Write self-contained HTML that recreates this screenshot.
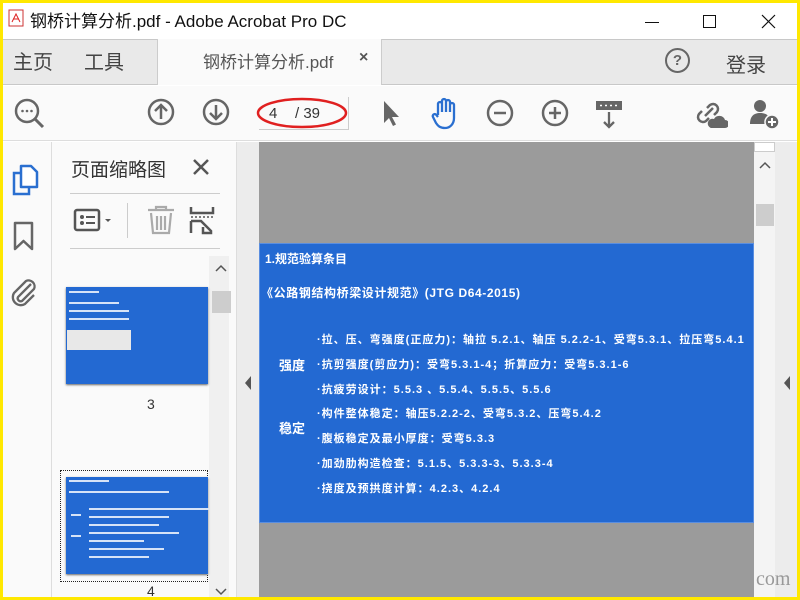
<!DOCTYPE html>
<html><head><meta charset="utf-8"><style>
*{margin:0;padding:0;box-sizing:border-box}
body{width:800px;height:600px;overflow:hidden;background:#ffe800;font-family:"Liberation Sans","Noto Sans CJK SC",sans-serif;position:relative}
.a{position:absolute}
.cj{font-family:"Liberation Sans","Noto Sans CJK SC",sans-serif}
.w{color:#fff;font-weight:bold;white-space:nowrap}
.tl{position:absolute;height:2px;background:#d6e3f7}
</style></head><body>
<div class="a" style="left:3px;top:3px;width:794px;height:594px;background:#fff;overflow:hidden">
<div class="a" style="left:0;top:0;width:794px;height:36px;background:#fff"></div>
<svg class="a" style="left:5px;top:6px" width="16" height="18"><rect x="1" y="1" width="14" height="16" fill="#fff" stroke="#c33"/><path d="M4 13 L8 5 L12 13 M5 10 H11" stroke="#d22" fill="none"/></svg>
<div class="a" style="left:27px;top:4px;font-size:17px;color:#111">钢桥计算分析.pdf - Adobe Acrobat Pro DC</div>
<div class="a" style="left:642px;top:19px;width:14px;height:1px;background:#111"></div>
<div class="a" style="left:700px;top:12px;width:13px;height:13px;border:1px solid #111"></div>
<svg class="a" style="left:758px;top:11px" width="15" height="15"><path d="M1 1L14 14M14 1L1 14" stroke="#111" stroke-width="1.2"/></svg>
<div class="a" style="left:0;top:36px;width:794px;height:46px;background:#e9e9e9;border-top:1px solid #c8c8c8;border-bottom:1px solid #c8c8c8"></div>
<div class="a" style="left:154px;top:36px;width:225px;height:46px;background:#fafafa;border-left:1px solid #ccc;border-right:1px solid #ccc"></div>
<div class="a cj" style="left:10px;top:43px;font-size:20px;color:#444">主页</div>
<div class="a cj" style="left:81px;top:43px;font-size:20px;color:#444">工具</div>
<div class="a cj" style="left:200px;top:45px;font-size:17px;color:#555">钢桥计算分析.pdf</div>
<div class="a" style="left:356px;top:46px;font-size:16px;color:#555;font-weight:bold">×</div>
<div class="a" style="left:662px;top:45px;width:25px;height:25px;border:2px solid #666;border-radius:50%;text-align:center;font-size:15px;line-height:21px;color:#666;font-weight:bold">?</div>
<div class="a cj" style="left:723px;top:46px;font-size:20px;color:#444">登录</div>
<div class="a" style="left:0;top:83px;width:794px;height:55px;background:#fafafa;border-bottom:1px solid #ddd"></div>
<svg class="a" style="left:10px;top:94px" width="34" height="34"><circle cx="14" cy="14" r="11" fill="none" stroke="#666" stroke-width="2.5"/><path d="M22 22L30 30" stroke="#666" stroke-width="3"/><circle cx="9.5" cy="14" r="1.3" fill="#666"/><circle cx="14" cy="14" r="1.3" fill="#666"/><circle cx="18.5" cy="14" r="1.3" fill="#666"/></svg>
<svg class="a" style="left:144px;top:95px" width="28" height="28"><circle cx="14" cy="14" r="12" fill="none" stroke="#666" stroke-width="2.5"/><path d="M14 21V7M8 13L14 7L20 13" stroke="#666" stroke-width="2.5" fill="none"/></svg>
<svg class="a" style="left:199px;top:95px" width="28" height="28"><circle cx="14" cy="14" r="12" fill="none" stroke="#666" stroke-width="2.5"/><path d="M14 7V21M8 15L14 21L20 15" stroke="#666" stroke-width="2.5" fill="none"/></svg>
<div class="a" style="left:256px;top:97px;width:90px;height:30px;border-bottom:1px solid #ccc"></div>
<div class="a" style="left:345px;top:94px;width:1px;height:33px;background:#ccc"></div>
<svg class="a" style="left:252px;top:92px" width="96" height="36"><ellipse cx="47" cy="18" rx="44" ry="14" fill="none" stroke="#e02020" stroke-width="2.5"/></svg>
<div class="a" style="left:266px;top:102px;font-size:15px;color:#333">4</div>
<div class="a" style="left:292px;top:102px;font-size:15px;color:#333">/ 39</div>
<svg class="a" style="left:378px;top:96px" width="20" height="28"><path d="M3 2V24L8 19L12 27L15 25.5L11 18H18Z" fill="#666"/></svg>
<svg class="a" style="left:427px;top:94px" width="32" height="34"><path d="M8 18V7a2 2 0 0 1 4 0V15M12 15V4a2 2 0 0 1 4 0V15M16 15V5a2 2 0 0 1 4 0V15M20 15V8a2 2 0 0 1 4 0V21c0 6-4 10-9 10s-7-2-9-5L3 20a2 2 0 0 1 3-2.5L8 20" fill="none" stroke="#2a6fd0" stroke-width="2.3" stroke-linejoin="round"/></svg>
<svg class="a" style="left:483px;top:96px" width="28" height="28"><circle cx="14" cy="14" r="12" fill="none" stroke="#666" stroke-width="2.5"/><path d="M8 14H20" stroke="#666" stroke-width="2.5"/></svg>
<svg class="a" style="left:538px;top:96px" width="28" height="28"><circle cx="14" cy="14" r="12" fill="none" stroke="#666" stroke-width="2.5"/><path d="M8 14H20M14 8V20" stroke="#666" stroke-width="2.5"/></svg>
<svg class="a" style="left:592px;top:97px" width="30" height="30"><rect x="1" y="1" width="26" height="9" fill="#666"/><path d="M5 5.5h2M10 5.5h2M15 5.5h2M20 5.5h2" stroke="#fff" stroke-width="1.5"/><path d="M14 12V27M9 22L14 27L19 22" stroke="#666" stroke-width="2.3" fill="none"/></svg>
<svg class="a" style="left:691px;top:95px" width="34" height="32"><path d="M13 10l3-3a5 5 0 0 1 7 7l-3 3M15 20l-3 3a5 5 0 0 1-7-7l3-3M11 18l8-8" fill="none" stroke="#666" stroke-width="2.5"/><path d="M17 30h14a4 4 0 0 0 0-8a6 6 0 0 0-11-1a4 4 0 0 0-3 9z" fill="#666"/></svg>
<svg class="a" style="left:745px;top:95px" width="34" height="32"><circle cx="12" cy="8" r="6" fill="#666"/><path d="M2 26c0-8 4-11 10-11s8 2 9 5v6z" fill="#666"/><circle cx="24" cy="24" r="7" fill="#666" stroke="#fafafa" stroke-width="1.5"/><path d="M20 24h8M24 20v8" stroke="#fff" stroke-width="2"/></svg>
<div class="a" style="left:0;top:139px;width:49px;height:455px;background:#fafafa;border-right:1px solid #ddd"></div>
<svg class="a" style="left:8px;top:160px" width="28" height="34"><path d="M10 3H20L26 9V24H10Z" fill="#fff" stroke="#2a6fd0" stroke-width="2.5" stroke-linejoin="round"/><path d="M10 10H3V31H18V24" fill="none" stroke="#2a6fd0" stroke-width="2.5"/></svg>
<svg class="a" style="left:9px;top:218px" width="24" height="32"><path d="M3 2H20V28L11.5 20L3 28Z" fill="none" stroke="#666" stroke-width="2.5" stroke-linejoin="round"/></svg>
<svg class="a" style="left:6px;top:273px" width="30" height="32"><path d="M22 8L9 21a3 3 0 0 0 4 4L25 13a6 6 0 0 0-8-8L5 17a8 8 0 0 0 11 11l9-9" fill="none" stroke="#666" stroke-width="2.3"/></svg>
<div class="a" style="left:49px;top:139px;width:185px;height:455px;background:#fafafa;border-right:1px solid #ddd"></div>
<div class="a cj" style="left:68px;top:152px;font-size:19px;color:#333">页面缩略图</div>
<svg class="a" style="left:189px;top:155px" width="18" height="18"><path d="M2 2L16 16M16 2L2 16" stroke="#555" stroke-width="2.5"/></svg>
<div class="a" style="left:67px;top:190px;width:150px;height:1px;background:#ccc"></div>
<div class="a" style="left:67px;top:245px;width:150px;height:1px;background:#ccc"></div>
<svg class="a" style="left:70px;top:205px" width="44" height="24"><rect x="2" y="2" width="24" height="20" rx="2" fill="none" stroke="#555" stroke-width="2.5"/><circle cx="9" cy="9" r="2" fill="#555"/><circle cx="9" cy="15" r="2" fill="#555"/><path d="M13 9h9M13 15h9" stroke="#555" stroke-width="2"/><path d="M32 11h6l-3 3z" fill="#555"/></svg>
<div class="a" style="left:124px;top:200px;width:1px;height:35px;background:#ccc"></div>
<svg class="a" style="left:144px;top:202px" width="28" height="30"><path d="M1 5H27M9 5V2H19V5M4 8L6 28H22L24 8M10 11V25M14 11V25M18 11V25" fill="none" stroke="#aaa" stroke-width="2.2"/></svg>
<svg class="a" style="left:186px;top:202px" width="26" height="30"><path d="M2 2V8H24V2M2 16V28M2 16H12L22 26V28H14V22" fill="none" stroke="#555" stroke-width="2.5"/><path d="M2 12H24" stroke="#555" stroke-width="1.5" stroke-dasharray="2 2"/></svg>
<div class="a" style="left:206px;top:253px;width:20px;height:341px;background:#f0f0f0"></div>
<div class="a" style="left:209px;top:288px;width:19px;height:22px;background:#cdcdcd"></div>
<svg class="a" style="left:211px;top:260px" width="14" height="10"><path d="M2 8L7 3L12 8" fill="none" stroke="#555" stroke-width="1.5"/></svg>
<svg class="a" style="left:211px;top:584px" width="14" height="10"><path d="M2 2L7 7L12 2" fill="none" stroke="#555" stroke-width="1.5"/></svg>
<div class="a" style="left:63px;top:284px;width:142px;height:97px;background:#2369d2;box-shadow:0 1px 2px #666"></div>
<div class="tl" style="left:66px;top:288px;width:30px"></div>
<div class="tl" style="left:66px;top:299px;width:50px"></div>
<div class="tl" style="left:98px;top:299px;width:14px"></div>
<div class="tl" style="left:66px;top:307px;width:60px"></div>
<div class="tl" style="left:66px;top:315px;width:60px"></div>
<div class="a" style="left:64px;top:327px;width:64px;height:20px;background:#e8e8e8"></div>
<div class="a" style="left:144px;top:393px;font-size:14px;color:#333">3</div>
<div class="a" style="left:57px;top:467px;width:148px;height:112px;border:1px dotted #222"></div>
<div class="a" style="left:63px;top:474px;width:142px;height:97px;background:#2369d2;box-shadow:0 1px 2px #666"></div>
<div class="tl" style="left:66px;top:477px;width:40px"></div>
<div class="tl" style="left:66px;top:488px;width:100px"></div>
<div class="tl" style="left:86px;top:505px;width:120px"></div>
<div class="tl" style="left:86px;top:513px;width:80px"></div>
<div class="tl" style="left:86px;top:521px;width:70px"></div>
<div class="tl" style="left:86px;top:529px;width:90px"></div>
<div class="tl" style="left:86px;top:537px;width:55px"></div>
<div class="tl" style="left:86px;top:545px;width:75px"></div>
<div class="tl" style="left:86px;top:553px;width:60px"></div>
<div class="tl" style="left:68px;top:511px;width:10px"></div>
<div class="tl" style="left:68px;top:532px;width:10px"></div>
<div class="a" style="left:144px;top:580px;font-size:14px;color:#333">4</div>
<div class="a" style="left:234px;top:139px;width:22px;height:455px;background:#ececec"></div>
<svg class="a" style="left:241px;top:372px" width="8" height="16"><path d="M7 1V15L1 8Z" fill="#555"/></svg>
<div class="a" style="left:256px;top:139px;width:495px;height:455px;background:#9b9b9b"></div>
<div class="a" style="left:256px;top:240px;width:495px;height:280px;background:#2369d2;border:1px solid #5a8ee0"></div>
<div class="a w cj" style="left:262px;top:247px;font-size:12px">1.规范验算条目</div>
<div class="a w cj" style="left:258px;top:281px;font-size:12px;letter-spacing:.6px">《公路钢结构桥梁设计规范》(JTG D64-2015)</div>
<div class="a w cj" style="left:276px;top:352px;font-size:13px">强度</div>
<div class="a w cj" style="left:276px;top:415px;font-size:13px">稳定</div>
<div class="a w cj" style="left:314px;top:328px;font-size:11px;letter-spacing:1px">·拉、压、弯强度(正应力)：轴拉 5.2.1、轴压 5.2.2-1、受弯5.3.1、拉压弯5.4.1</div>
<div class="a w cj" style="left:314px;top:353px;font-size:11px;letter-spacing:1px">·抗剪强度(剪应力)：受弯5.3.1-4；折算应力：受弯5.3.1-6</div>
<div class="a w cj" style="left:314px;top:378px;font-size:11px;letter-spacing:1px">·抗疲劳设计：5.5.3 、5.5.4、5.5.5、5.5.6</div>
<div class="a w cj" style="left:314px;top:402px;font-size:11px;letter-spacing:1px">·构件整体稳定：轴压5.2.2-2、受弯5.3.2、压弯5.4.2</div>
<div class="a w cj" style="left:314px;top:427px;font-size:11px;letter-spacing:1px">·腹板稳定及最小厚度：受弯5.3.3</div>
<div class="a w cj" style="left:314px;top:452px;font-size:11px;letter-spacing:1px">·加劲肋构造检查：5.1.5、5.3.3-3、5.3.3-4</div>
<div class="a w cj" style="left:314px;top:477px;font-size:11px;letter-spacing:1px">·挠度及预拱度计算：4.2.3、4.2.4</div>
<div class="a" style="left:751px;top:139px;width:21px;height:455px;background:#f4f4f4"></div>
<div class="a" style="left:751px;top:139px;width:21px;height:10px;background:#fff;border:1px solid #ccc"></div>
<svg class="a" style="left:755px;top:157px" width="14" height="10"><path d="M2 8L7 3L12 8" fill="none" stroke="#555" stroke-width="1.5"/></svg>
<div class="a" style="left:753px;top:201px;width:18px;height:22px;background:#cdcdcd"></div>
<div class="a" style="left:772px;top:139px;width:22px;height:455px;background:#ececec"></div>
<svg class="a" style="left:780px;top:372px" width="8" height="16"><path d="M7 1V15L1 8Z" fill="#555"/></svg>
<div class="a" style="left:753px;top:565px;font-size:20px;color:#999;font-family:'Liberation Serif',serif">com</div>
</div>
</body></html>
